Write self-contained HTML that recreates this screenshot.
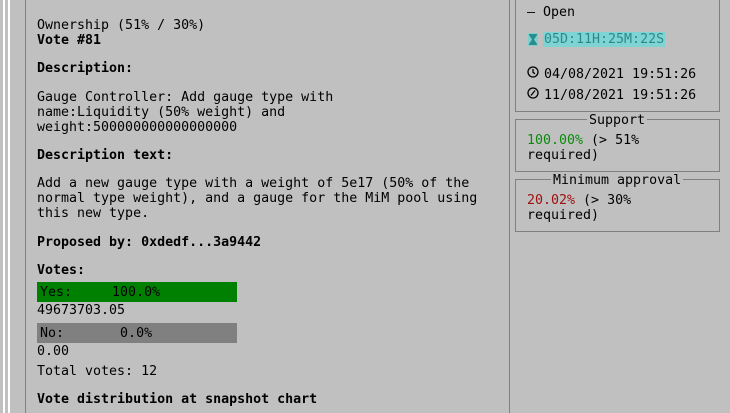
<!DOCTYPE html>
<html><head><style>
body{margin:0;width:730px;height:413px;background:#c0c0c0;overflow:hidden;position:relative;font-family:"DejaVu Sans Mono","Liberation Mono",monospace;font-size:13.3px;color:#000;}
.a{position:absolute;white-space:pre;line-height:15px;}
.b{font-weight:bold;}
.vl{position:absolute;top:0;height:413px;width:1px;}
.box{position:absolute;border:1px solid #808080;}
.lg{position:absolute;top:-7px;background:#c0c0c0;line-height:15px;padding:0 2px;white-space:pre;}
</style></head><body>
<div class="vl" style="left:3px;width:2px;background:#fff"></div>
<div class="vl" style="left:8px;width:2px;background:#fff"></div>
<div class="vl" style="left:25px;background:#808080"></div>
<div class="vl" style="left:509px;background:#808080"></div>

<div class="a" style="left:37px;top:18px">Ownership (51% / 30%)</div>
<div class="a b" style="left:37px;top:33px">Vote #81</div>
<div class="a b" style="left:37px;top:61px">Description:</div>
<div class="a" style="left:37px;top:90px">Gauge Controller: Add gauge type with
name:Liquidity (50% weight) and
weight:500000000000000000</div>
<div class="a b" style="left:37px;top:148px">Description text:</div>
<div class="a" style="left:37px;top:176px">Add a new gauge type with a weight of 5e17 (50% of the
normal type weight), and a gauge for the MiM pool using
this new type.</div>
<div class="a b" style="left:37px;top:235px">Proposed by: 0xdedf...3a9442</div>
<div class="a b" style="left:37px;top:263px">Votes:</div>
<div class="a" style="left:37px;top:282px;width:197px;padding-left:3px;height:20px;background:#008000;line-height:21px">Yes:     100.0%</div>
<div class="a" style="left:37px;top:303px">49673703.05</div>
<div class="a" style="left:37px;top:323px;width:197px;padding-left:3px;height:20px;background:#808080;line-height:21px">No:       0.0%</div>
<div class="a" style="left:37px;top:344px">0.00</div>
<div class="a" style="left:37px;top:364px">Total votes: 12</div>
<div class="a b" style="left:37px;top:392px">Vote distribution at snapshot chart</div>

<div class="box" style="left:515px;top:-2px;width:203px;height:112px"></div>
<div class="a" style="left:527px;top:5px">– Open</div>
<svg style="position:absolute;left:528px;top:33px" width="10" height="13" viewBox="0 0 10 13"><rect width="10" height="13" fill="#7fcfcf"/><path d="M1 1h8v1L6 6.5 9 11v1H1v-1L4 6.5 1 2z" fill="#2a8c8c"/></svg>
<div class="a" style="left:543px;top:32px;background:#7fd3d3;color:#2a8a8a;padding:0 1px">05D:11H:25M:22S</div>
<svg style="position:absolute;left:527px;top:66px" width="12" height="12" viewBox="0 0 12 12"><circle cx="6" cy="6" r="5" fill="none" stroke="#000" stroke-width="1.3"/><path d="M6 3v3.3l2 1.5" fill="none" stroke="#000" stroke-width="1.3"/></svg>
<div class="a" style="left:544px;top:67px">04/08/2021 19:51:26</div>
<svg style="position:absolute;left:527px;top:87px" width="12" height="12" viewBox="0 0 12 12"><circle cx="6" cy="6" r="5" fill="none" stroke="#000" stroke-width="1.3"/><path d="M4 8.5L8 3.5" fill="none" stroke="#000" stroke-width="1.3"/></svg>
<div class="a" style="left:544px;top:88px">11/08/2021 19:51:26</div>

<div class="box" style="left:515px;top:119px;width:203px;height:51px"><div class="lg" style="left:71px">Support</div></div>
<div class="a" style="left:527px;top:133px"><span style="color:#0a8a0a">100.00%</span> (&gt; 51%
required)</div>
<div class="box" style="left:515px;top:179px;width:203px;height:51px"><div class="lg" style="left:35px">Minimum approval</div></div>
<div class="a" style="left:527px;top:193px"><span style="color:#a01010">20.02%</span> (&gt; 30%
required)</div>
</body></html>
